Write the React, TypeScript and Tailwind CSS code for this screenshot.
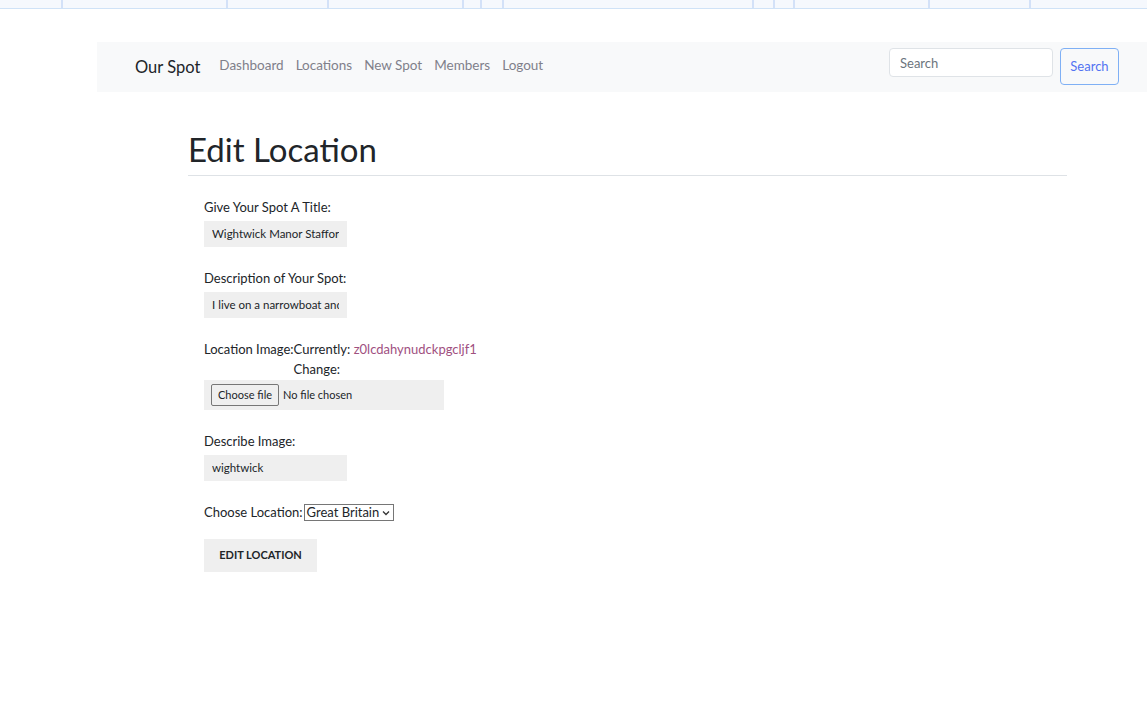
const dividers = [61, 226, 327, 462, 480, 502, 752, 773, 793, 928, 1029];

const links = ["Dashboard", "Locations", "New Spot", "Members", "Logout"];

function TopStrip() {
  return (
    <div className="relative h-[9px] bg-[#f5f8fd] border-b border-[#cfe2f7]">
      {dividers.map((x) => (
        <span
          key={x}
          className="absolute top-0 h-[8px] w-[2px] bg-[#d3e1f8]"
          style={{ left: x }}
        />
      ))}
    </div>
  );
}

function Navbar() {
  return (
    <nav className="ml-[97px] mt-[33px] h-[50px] bg-[#f8f9fa] flex items-start pl-[38px] pr-[28px]">
      <span className="mt-[15px] text-[16.5px] text-[#212529] leading-[20px]">Our Spot</span>
      <ul className="ml-[19px] mt-[13px] flex gap-[12px] text-[13.5px] leading-[20px] text-[#80808a]">
        {links.map((l) => (
          <li key={l}>
            <a href="#" className="hover:text-[#555]">{l}</a>
          </li>
        ))}
      </ul>
      <form className="ml-auto mt-[6px] flex items-start gap-[7px]">
        <input
          placeholder="Search"
          className="w-[164px] h-[29px] px-[10px] rounded-[4px] border border-[#dfe3e7] bg-white text-[13px] placeholder:text-[#6c757d] outline-none"
        />
        <button
          type="button"
          className="w-[59px] h-[37px] rounded-[4px] border border-[#7fb0f5] text-[13px] text-[#5273f2]"
        >
          Search
        </button>
      </form>
    </nav>
  );
}

function Field({ label, value }: { label: string; value: string }) {
  return (
    <div className="flex flex-col">
      <label className="text-[13px] leading-[18px] text-[#212529]">{label}</label>
      <div className="mt-[5px] w-[143px] h-[26px] bg-[#efefef] px-[8px]">
        <div className="overflow-hidden whitespace-nowrap text-[11.5px] leading-[26px] text-[#212529]">
          {value}
        </div>
      </div>
    </div>
  );
}

export default function App() {
  return (
    <div className="min-h-[708px] bg-white text-[#212529]" style={{ fontFamily: "Lato, 'Noto Sans', sans-serif" }}>
      <TopStrip />
      <Navbar />
      <main className="ml-[188px] w-[879px]">
        <h1 className="mt-[37px] text-[33px] leading-[40px] text-[#212529]">Edit Location</h1>
        <hr className="mt-[6px] border-t border-[#dee2e6]" />
        <form className="ml-[16px] mt-[22px] flex flex-col">
          <Field label="Give Your Spot A Title:" value="Wightwick Manor Stafford" />
          <div className="mt-[22px]">
            <Field label="Description of Your Spot:" value="I live on a narrowboat and" />
          </div>
          <div className="mt-[21px] flex flex-col">
            <div className="flex text-[13px] leading-[20px]">
              <span>Location Image:</span>
              <div className="flex flex-col">
                <span>
                  Currently: <a href="#" className="text-[#a0507f]">z0lcdahynudckpgcljf1</a>
                </span>
                <span>Change:</span>
              </div>
            </div>
            <div className="mt-[1px] w-[240px] h-[30px] bg-[#efefef] flex items-center pl-[7px] text-[11px]">
              <span className="h-[22px] px-[6px] flex items-center border border-[#767676] rounded-[2px] bg-[#efefef] text-[#212529]">
                Choose file
              </span>
              <span className="ml-[4px]">No file chosen</span>
            </div>
          </div>
          <div className="mt-[22px]">
            <Field label="Describe Image:" value="wightwick" />
          </div>
          <div className="mt-[22px] flex items-center text-[13px] leading-[18px]">
            <span>Choose Location:</span>
            <span className="ml-[1px] h-[17px] pl-[2px] pr-[3px] flex items-center gap-[3px] border border-[#767676] text-[#212529]">
              Great Britain
              <svg width="8" height="6" viewBox="0 0 8 6" className="mt-[1px]">
                <path d="M1 1.5 L4 4.5 L7 1.5" fill="none" stroke="#333" strokeWidth="1.3" />
              </svg>
            </span>
          </div>
          <button
            type="button"
            className="mt-[18px] w-[113px] h-[33px] bg-[#efefef] text-[11px] font-bold text-[#212529] uppercase"
          >
            Edit Location
          </button>
        </form>
      </main>
    </div>
  );
}
